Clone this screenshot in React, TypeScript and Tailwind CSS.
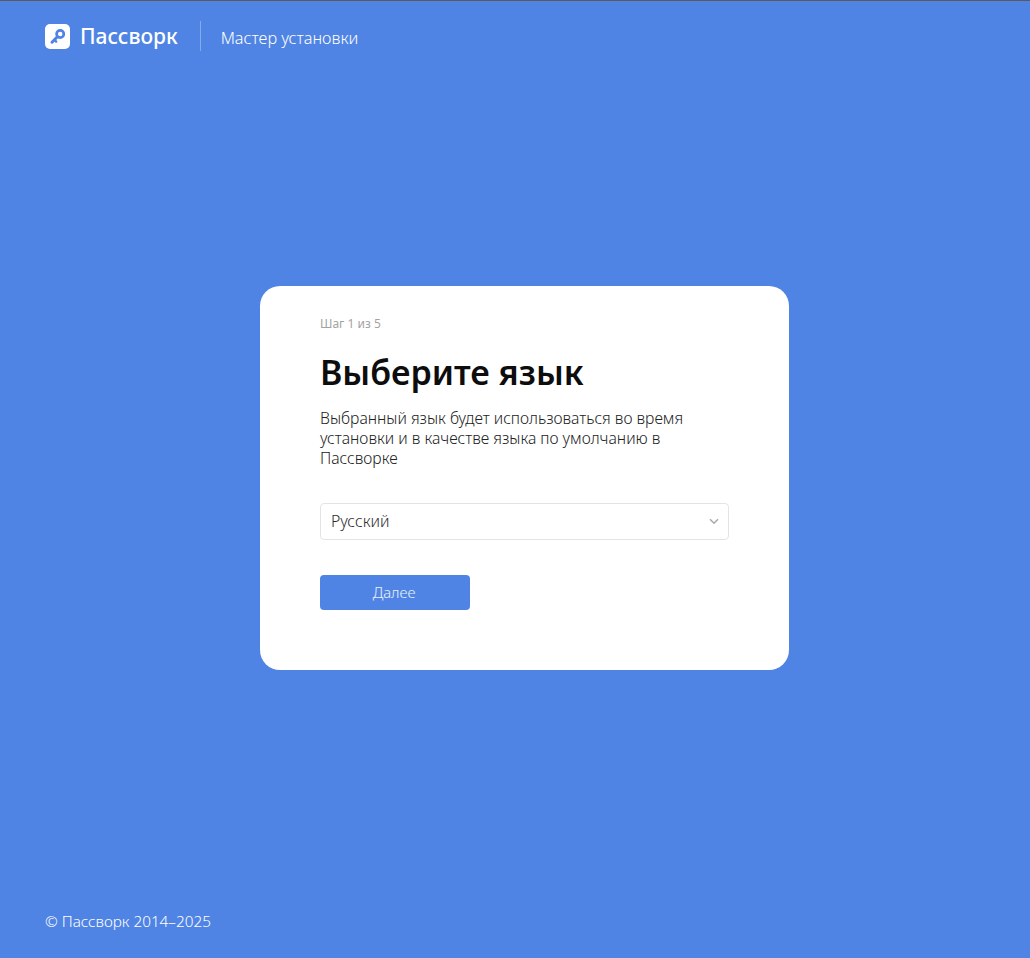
const KeyLogo = () => (
  <div className="w-[25px] h-[25px] bg-white rounded-[5px]">
    <svg width="25" height="25" viewBox="0 0 25 25" fill="none">
      <path d="M7 18.2 L12.4 12.8" stroke="#4f84e4" strokeWidth="3" strokeLinecap="round" />
      <path d="M9.6 16 L11.2 17.6" stroke="#4f84e4" strokeWidth="2.4" strokeLinecap="round" />
      <circle cx="15.2" cy="10" r="3.6" stroke="#4f84e4" strokeWidth="2.7" />
    </svg>
  </div>
);

export default function App() {
  return (
    <div className="h-[958px] flex flex-col bg-[#4f84e4] border-t border-[#5a5a5a] text-white font-['Noto_Sans',sans-serif]">
      <header className="flex items-center h-[72px] pl-[45px] pb-[1px]">
        <KeyLogo />
        <span className="ml-[10px] text-[21px] font-medium leading-none">Пассворк</span>
        <div className="ml-[22px] mb-[1px] w-px h-[30px] bg-white/30" />
        <span className="ml-[20px] mt-[4px] text-[16.3px] font-light text-white">Мастер установки</span>
      </header>

      <main className="flex-1 pl-[260px] pt-[213px]">
        <div className="w-[529px] h-[384px] bg-white rounded-[20px] px-[60px] pt-[30px] text-[#333]">
          <div className="text-[12px] leading-[16px] text-[#a3a3a3]">Шаг 1 из 5</div>
          <h1 className="mt-[17px] text-[34px] leading-[46px] font-semibold text-[#0d0d0d]">
            Выберите язык
          </h1>
          <p className="mt-[13px] w-[400px] text-[15.7px] leading-[20px] font-light text-[#222]">
            Выбранный язык будет использоваться во время установки и в качестве языка по умолчанию в Пассворке
          </p>
          <div className="mt-[35px] w-[409px] h-[37px] flex items-center justify-between border border-[#e4e4e4] rounded-[4px] pl-[10px] pr-[9px] text-[15.8px] font-light text-[#2b2b2b]">
            <span>Русский</span>
            <svg width="10" height="7" viewBox="0 0 10 7" fill="none">
              <path d="M1 1.2 L5 5.2 L9 1.2" stroke="#ababab" strokeWidth="1.6" />
            </svg>
          </div>
          <button className="block mt-[35px] w-[150px] h-[35px] pr-[2px] bg-[#4f84e4] rounded-[4px] text-[14.8px] font-light text-white/90">
            Далее
          </button>
        </div>
      </main>

      <footer className="h-[72px] pl-[45px] pt-[25px] text-[15.3px] leading-[20px] font-light text-white">
        © Пассворк 2014–2025
      </footer>
    </div>
  );
}
